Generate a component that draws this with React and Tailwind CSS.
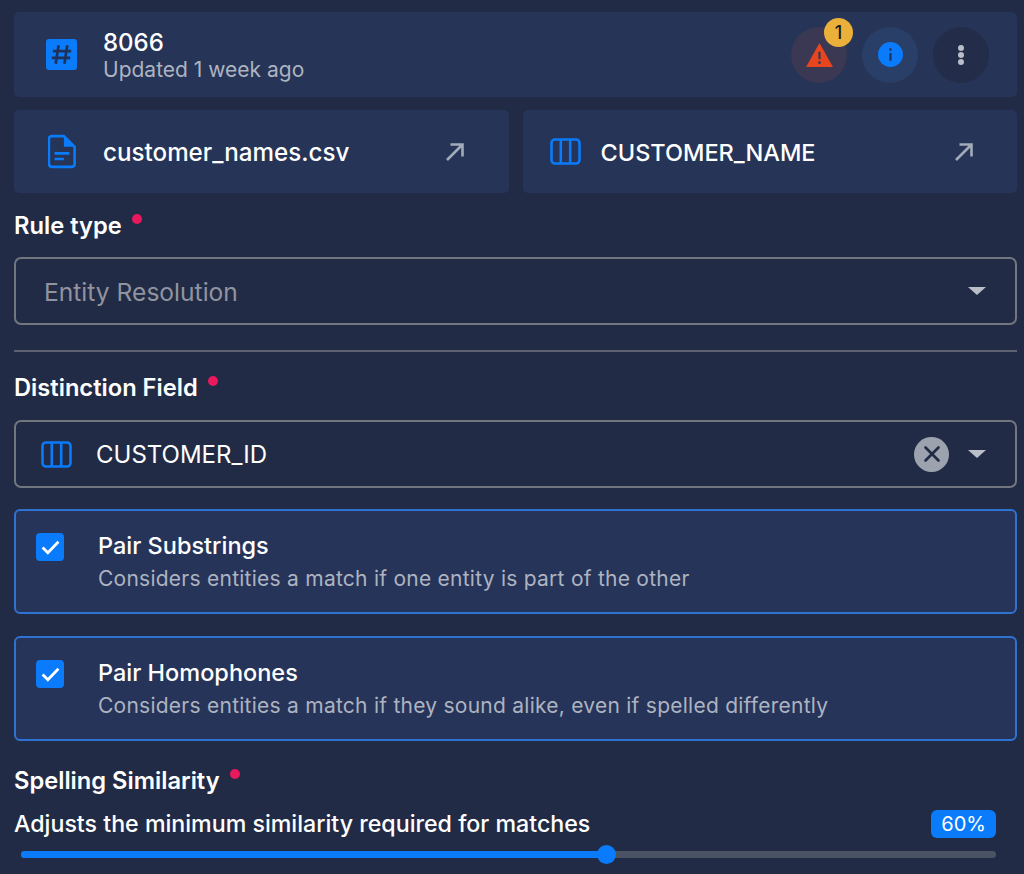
import { X } from "lucide-react";

const font = { fontFamily: "Inter, sans-serif" };

function ColumnsIcon() {
  return (
    <svg width="31" height="27" viewBox="0 0 31 27" fill="none" stroke="#0a7bfa" strokeWidth="2.6">
      <rect x="1.5" y="1.5" width="28" height="24" rx="3.5" />
      <path d="M10.8 1.5v24M20.2 1.5v24" />
    </svg>
  );
}

function HashIcon() {
  return (
    <svg width="31" height="31" viewBox="0 0 32 32">
      <rect width="32" height="32" rx="3" fill="#0a7bfa" />
      <path d="M13 6.5 10 25.5M22 6.5 19 25.5M7 12.5h19M6 19.5h19" stroke="#1f3158" strokeWidth="2.8" fill="none" />
    </svg>
  );
}

function FileIcon() {
  return (
    <svg width="28" height="35" viewBox="0 0 30 36" fill="none">
      <path d="M4 1.5h13L28.5 13v18.5a3 3 0 0 1-3 3H4a3 3 0 0 1-3-3v-27a3 3 0 0 1 3-3Z" stroke="#0a7bfa" strokeWidth="2.8" />
      <path d="M17 1.5V13h11.5Z" fill="#0a7bfa" />
      <path d="M7 20h16M7 26h10" stroke="#0a7bfa" strokeWidth="2.8" />
    </svg>
  );
}

function ArrowIcon() {
  return (
    <svg width="20" height="20" viewBox="0 0 20 20" fill="none" stroke="#a3abba" strokeWidth="2.6">
      <path d="M2 18 17.5 2.5M5.5 2.5h12v12" />
    </svg>
  );
}

function Caret() {
  return <div className="h-0 w-0 border-x-[9px] border-t-[8px] border-x-transparent border-t-[#b9bec8]" />;
}

function Label({ text }) {
  return (
    <div className="flex items-start text-[23.7px] leading-[30px] font-semibold text-white">
      {text}
      <span className="mt-[3px] ml-[10px] h-[10px] w-[10px] rounded-full bg-[#e8195c]" />
    </div>
  );
}

function CheckCard({ title, desc, className }) {
  return (
    <div className={`flex h-[105px] rounded-[6px] border-2 border-[#2f73d2] bg-[#263459] pl-[20px] ${className}`}>
      <div className="mt-[22px] flex h-[28px] w-[28px] items-center justify-center rounded-[4px] bg-[#0a7bfa]">
        <svg width="19" height="15" viewBox="0 0 18 14" fill="none" stroke="white" strokeWidth="2.6">
          <path d="M1.5 7 6.5 12 16.5 1.5" />
        </svg>
      </div>
      <div className="ml-[34px] pt-[19px]">
        <div className="text-[23.5px] leading-[32px] font-medium text-white">{title}</div>
        <div className="mt-[2px] text-[21px] leading-[30px] tracking-[0.25px] text-[#adb3c0]">{desc}</div>
      </div>
    </div>
  );
}

export default function App() {
  return (
    <div style={font} className="h-[874px] overflow-hidden bg-[#222b45] pt-[12px] pr-[7px] pl-[14px]">
      {/* Header */}
      <div className="flex h-[85px] items-center rounded-[5px] bg-[#253457] pr-[28px] pl-[32px]">
        <HashIcon />
        <div className="ml-[26px] grow pt-[2px]">
          <div className="text-[24px] leading-[29px] font-medium text-white">8066</div>
          <div className="text-[21px] leading-[26px] text-[#adb3c0]">Updated 1 week ago</div>
        </div>
        <div className="relative flex h-[56px] w-[56px] items-center justify-center rounded-full bg-[#3a3852]">
          <svg width="27" height="24" viewBox="0 0 28 25">
            <path d="M14 0 28 25H0Z" fill="#e8451f" />
            <path d="M14 9v8M14 19v3" stroke="#3a3852" strokeWidth="2.4" />
          </svg>
          <span className="absolute top-[-9px] right-[-6px] flex h-[29px] w-[29px] items-center justify-center rounded-full bg-[#eab03a] text-[18px] font-medium text-[#1c1c1c]">
            1
          </span>
        </div>
        <div className="ml-[15px] flex h-[56px] w-[56px] items-center justify-center rounded-full bg-[#2a3f68]">
          <svg width="25" height="25" viewBox="0 0 26 26">
            <circle cx="13" cy="13" r="13" fill="#0a7bfa" />
            <path d="M13 11.5v8M13 6.5v2.6" stroke="#1f3158" strokeWidth="2.2" />
          </svg>
        </div>
        <div className="ml-[15px] flex h-[56px] w-[56px] flex-col items-center justify-center gap-[1px] rounded-full bg-[#232c48]">
          <span className="h-[6px] w-[6px] rounded-full bg-[#b9bec8]" />
          <span className="h-[6px] w-[6px] rounded-full bg-[#b9bec8]" />
          <span className="h-[6px] w-[6px] rounded-full bg-[#b9bec8]" />
        </div>
      </div>

      {/* Links */}
      <div className="mt-[13px] grid grid-cols-2 gap-[14px]">
        <div className="flex h-[83px] items-center rounded-[5px] bg-[#253457] pr-[44px] pl-[34px]">
          <FileIcon />
          <span className="ml-[27px] grow pt-[3px] text-[24.2px] font-medium text-white">customer_names.csv</span>
          <ArrowIcon />
        </div>
        <div className="flex h-[83px] items-center rounded-[5px] bg-[#253457] pr-[43px] pl-[27px]">
          <ColumnsIcon />
          <span className="ml-[20px] grow pt-[2px] text-[23.5px] font-medium text-white">CUSTOMER_NAME</span>
          <ArrowIcon />
        </div>
      </div>

      <div className="mt-[18px]">
        <Label text="Rule type" />
      </div>
      <div className="mt-[16px] flex h-[68px] items-center justify-between rounded-[7px] border-2 border-[#72767e] pr-[29px] pl-[28px]">
        <span className="pt-[2px] text-[24.6px] text-[#9094a0]">Entity Resolution</span>
        <Caret />
      </div>

      <div className="mt-[25px] h-[2px] bg-[#5c6270]" />

      <div className="mt-[21px]">
        <Label text="Distinction Field" />
      </div>
      <div className="mt-[17px] flex h-[68px] items-center rounded-[7px] border-2 border-[#72767e] pr-[29px] pl-[25px]">
        <ColumnsIcon />
        <span className="ml-[24px] grow pt-[2px] text-[24px] text-white">CUSTOMER_ID</span>
        <div className="mr-[19px] flex h-[35px] w-[35px] items-center justify-center rounded-full bg-[#9ca3af]">
          <X size={26} color="#222b45" strokeWidth={2.4} />
        </div>
        <Caret />
      </div>

      <CheckCard
        className="mt-[21px]"
        title="Pair Substrings"
        desc="Considers entities a match if one entity is part of the other"
      />
      <CheckCard
        className="mt-[22px]"
        title="Pair Homophones"
        desc="Considers entities a match if they sound alike, even if spelled differently"
      />

      <div className="mt-[25px]">
        <Label text="Spelling Similarity" />
      </div>
      <div className="mt-[12px] flex items-center justify-between pr-[21px]">
        <span className="text-[23.2px] leading-[32px] font-medium text-white">Adjusts the minimum similarity required for matches</span>
        <span className="rounded-[6px] bg-[#0a7bfa] px-[10px] text-[20px] leading-[28px] text-white">60%</span>
      </div>
      <div className="relative mt-[11px] mr-[21px] ml-[7px] h-[7px] rounded-full bg-[#4a5363]">
        <div className="h-full w-[60%] rounded-full bg-[#0a7bfa]" />
        <span className="absolute top-[-6px] left-[60%] ml-[-9px] h-[19px] w-[19px] rounded-full bg-[#0a7bfa]" />
      </div>
    </div>
  );
}
